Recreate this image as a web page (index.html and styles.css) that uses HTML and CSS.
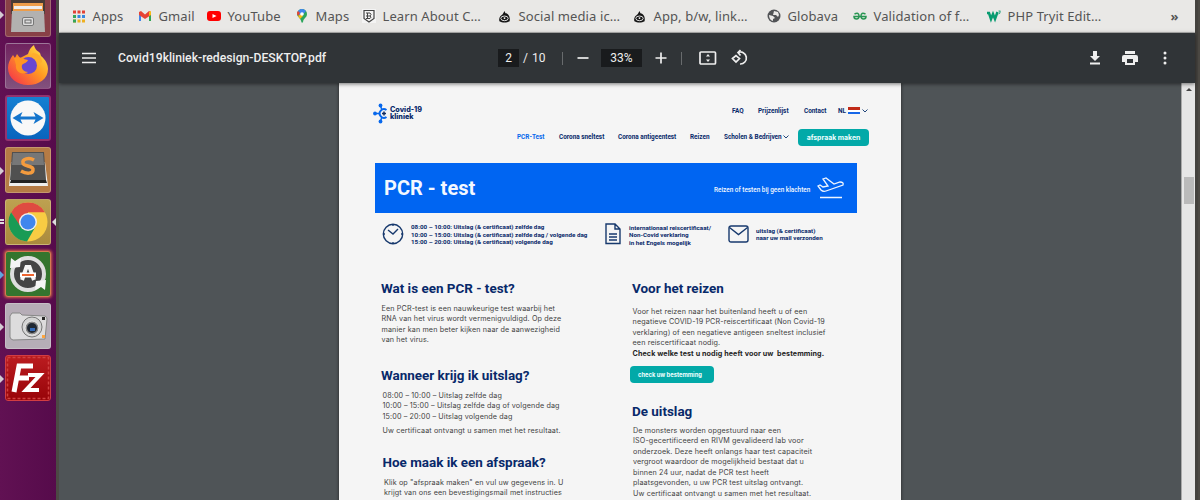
FILE: index.html
```html
<!DOCTYPE html>
<html lang="nl">
<head>
<meta charset="utf-8">
<title>Covid19kliniek-redesign-DESKTOP.pdf</title>
<link rel="stylesheet" href="styles.css">
</head>
<body>
<div class="desktop">
  <aside class="launcher">
    <div class="tile files"><svg viewBox="0 0 46 46"><path fill="#493b35" d="M6 6h34v17H6z"/><path fill="#ed9d4a" d="M8 12h30v8H8z"/><path fill="#eee" d="M9 15h28v3H9z"/><path fill="#b2b1b0" d="M7 20h32l1 21H6z"/><rect x="17.500" y="26.500" width="11" height="8" rx="1.500" fill="#ddd" stroke="#777"/><rect x="20" y="29" width="6" height="3" fill="#ddd" stroke="#666"/></svg><i class="pip"></i></div>
    <div class="tile firefox"><svg viewBox="0 0 46 46"><defs><linearGradient id="ff" x1="1" y1="0" x2="0" y2="1"><stop offset="0" stop-color="#fff04f"/><stop offset=".45" stop-color="#ff9b22"/><stop offset="1" stop-color="#f5264f"/></linearGradient></defs><path fill="url(#ff)" d="M23 11c1-4 3-7 6-9 1 5 4 6 6 8l1 3c5 4 7 9 7 13 0 10-9 16-20 16S3 35 3 25c0-5 2-9 5-13l2 3 2-4 3 4z"/><circle cx="23.500" cy="22.500" r="8.500" fill="#6847d1"/><path fill="#ff9524" d="M9 15c5-2 8 1 14 2-1 3-4 3-6 5-1 4 2 7 6 7-7 4-13-1-12-7z"/><path fill="#ffad2d" d="M24 14c6-1 9 3 9 8l4-3c0-6-5-9-9-9z"/></svg></div>
    <div class="tile viewer"><svg viewBox="0 0 46 46"><circle cx="23" cy="23" r="17.500" fill="#f8f8f8"/><path fill="#1475cd" d="m7.500 23 10-6-2 4.500h15l-2-4.500 10 6-10 6 2-4.500h-15l2 4.500z"/></svg></div>
    <div class="tile sublime"><svg viewBox="0 0 46 46"><path fill="#eee" d="M6 15h34l3 24H4z"/><path fill="#222" d="M6 33h35l1 3H5z"/><path fill="#505050" d="M7 5h32l2 28H5z"/><path fill="#777" d="M8 6h30l1 12H7z"/><path d="M29 13c-5-3-12-1-11 3 0 4 11 2 10 7 0 4-7 4-12 1" fill="none" stroke="#f49b3e" stroke-width="3.500"/></svg><i class="pip"></i></div>
    <div class="tile chrome"><svg viewBox="0 0 46 46"><circle cx="23" cy="23" r="19.500" fill="#f8cc43"/><path fill="#df4b41" d="M6.100 13.200A19.500 19.500 0 0 1 39.900 13.200H23v10l-8 5z"/><path fill="#199b55" d="M6.100 13.200A19.500 19.500 0 0 0 22 42.500l8-14-7-1-8-1z"/><circle cx="23" cy="23" r="9" fill="#eee"/><circle cx="23" cy="23" r="7.500" fill="#4086ee"/></svg><i class="pip double"></i><i class="active"></i></div>
    <div class="tile updater"><svg viewBox="0 0 46 46"><circle cx="23" cy="23" r="16" fill="#444" stroke="#dedede" stroke-width="4"/><path d="m5 17 1-10 4 3 6-3-1 9zM41 29l-1 10-4-3-6 3 1-9z" fill="#f5f5f5"/><path d="m17 29 4.500-13h3L29 29" fill="none" stroke="#f5f5f5" stroke-width="4"/><path d="M15 24h16" stroke="#fff" stroke-width="5"/><path d="M17 24h12" stroke="#ed6530" stroke-width="2"/></svg><i class="pip blue"></i></div>
    <div class="tile camera"><svg viewBox="0 0 46 46"><path fill="#dddcdd" stroke="#888" d="m5 13 2-3h8l2 2 23 1q2 1 2 3l-2 20-32 1q-3-1-3-3z"/><circle cx="27" cy="24" r="10" fill="#d4d4d4" stroke="#777"/><circle cx="27" cy="25" r="7" fill="#888" stroke="#eee"/><circle cx="27" cy="25" r="5" fill="#202832"/><path fill="#326ab8" d="M25 25h5v3h-5z"/><path fill="#262626" d="M37 14h3v3h-3z"/><path fill="#ffa43d" d="M37 32h3v3h-3z"/></svg><i class="pip"></i></div>
    <div class="tile filezilla"><svg viewBox="0 0 46 46"><rect x="2.500" y="2.500" width="41" height="41" fill="none" stroke="#d04040" stroke-width="1.500" stroke-dasharray="3 2"/><path d="m9 37 5-26h14M12 23h12" fill="none" stroke="#fff" stroke-width="5"/><path d="M23 20h12L21 35h13" fill="none" stroke="#fff" stroke-width="4"/></svg><i class="pip"></i></div>
  </aside>
  <main class="browser">
    <nav class="bookmarks">
      <a><svg viewBox="0 0 14 14"><path d="M1 3h12" stroke="#e34235" stroke-width="3" stroke-dasharray="3 1.500"/><path d="M1 7.500h12" stroke="#3487df" stroke-width="3" stroke-dasharray="3 1.500"/><path d="M1 12h12" stroke="#eeb020" stroke-width="3" stroke-dasharray="3 1.500"/><path d="M1 7.500h3M1 12h3" stroke="#35a65b" stroke-width="3"/></svg><span>Apps</span></a>
      <a><svg viewBox="0 0 14 14"><path d="M1 4v8h2V6" fill="#4185eb"/><path d="M11 6v6h2V4" fill="#30a554"/><path d="m1 3 2-1 4 3.500L11 2l2 1v3L7 10 1 6z" fill="#e64335"/><path d="m11 3 2-1v4l-2 1z" fill="#f8bb15"/></svg><span>Gmail</span></a>
      <a><svg viewBox="0 0 14 14"><rect y="2" width="14" height="10" rx="3" fill="#f00"/><path fill="#fff" d="m5.500 5 4 2-4 2z"/></svg><span>YouTube</span></a>
      <a><svg viewBox="0 0 14 14"><path fill="#2da55c" d="M2 5a5 5 0 0 1 10 0c0 4-4 4-4 8.500H6.500C6 9 2 8 2 5z"/><path fill="#4085ee" d="M3 2c3-3 6-2 8 0L5 9z"/><path fill="#e94435" d="m3 2 2 2-2 3Q1 4 3 2z"/><path fill="#fabb16" d="m3 7 3-2 2 2-3 3z"/><circle cx="7" cy="5" r="1.800" fill="#fff"/></svg><span>Maps</span></a>
      <a><svg viewBox="0 0 14 14"><path fill="#f4f4f4" d="M0 0h14v14H0z"/><path fill="none" stroke="#444" stroke-width="1.200" d="M2 1.500h10v8L7 13 2 9.500z"/><path fill="none" stroke="#444" d="M4 4h4q2 1.500 0 3H4M5.500 4v5.500M4 9.500h4q2-1.500 0-2.500"/></svg><span>Learn About C…</span></a>
      <a><svg class="eye" viewBox="0 0 14 14"><path fill="#151515" d="m7 1 1 2.500c3 0 5.500 4 4.500 8.500-3 2-8 2-11 0C.5 8 3 6 5 4.500z"/><ellipse cx="7" cy="9" rx="4" ry="2.500" fill="none" stroke="#eee"/><circle cx="7" cy="8.700" r="1" fill="#fff"/></svg><span>Social media ic…</span></a>
      <a><svg class="eye" viewBox="0 0 14 14"><path fill="#151515" d="m7 1 1 2.500c3 0 5.500 4 4.500 8.500-3 2-8 2-11 0C.5 8 3 6 5 4.500z"/><ellipse cx="7" cy="9" rx="4" ry="2.500" fill="none" stroke="#eee"/><circle cx="7" cy="8.700" r="1" fill="#fff"/></svg><span>App, b/w, link…</span></a>
      <a><svg viewBox="0 0 14 14"><circle cx="7" cy="7" r="6.500" fill="#515356"/><path fill="#e9e8e6" d="m2 6 4 1 2 2-2 1v2Q2 11 2 6zM7 2l4 1 1 3-1 2-2-2-3 0z"/></svg><span>Globava</span></a>
      <a><svg viewBox="0 0 14 14"><path fill="none" stroke="#299553" stroke-width="1.500" d="M1.500 5Q6 3 6 7q0 3-2.500 3T1 7.500h12Q13 10 10.500 10T8 7q0-4 4.500-2"/></svg><span>Validation of f…</span></a>
      <a><svg viewBox="0 0 14 14"><path fill="none" stroke="#089b70" stroke-width="2.500" d="M0 4h2l2 6 2-5 2 5 2.500-7"/><path d="M11.500 2h2l-1 1q2 1-1 2" stroke="#089b70" stroke-width=".8" fill="none"/></svg><span>PHP Tryit Edit…</span></a>
      <b>»</b>
    </nav>
    <header class="pdfbar">
      <svg class="menu" viewBox="0 0 14 12"><path d="M0 1.500h14M0 6h14M0 10.500h14"/></svg>
      <span class="filename">Covid19kliniek-redesign-DESKTOP.pdf</span>
      <span class="box num">2</span><span class="total">/&nbsp;10</span><i></i>
      <svg class="minus" viewBox="0 0 12 12"><path d="M.5 6h11"/></svg>
      <span class="box">33%</span>
      <svg class="plus" viewBox="0 0 12 12"><path d="M.5 6h11M6 .5v11"/></svg><i></i>
      <svg class="fit" viewBox="0 0 18 14"><rect x="1" y="1" width="15.500" height="12" rx="1"/><path class="solid" d="m9 3 2 2.500H7zM9 11l2-2.500H7z"/></svg>
      <svg class="rotate" viewBox="0 0 17 16"><path d="m1.500 8.500 3.500-3 3.500 3-3.500 3.500zM7 2.500a6 6 0 1 1 2 11.500M9.500 0 7 2.500 9.500 5.500"/></svg>
      <svg class="download" viewBox="0 0 12 14"><path class="solid" d="M4 0h4v5h3l-5 5-5-5h3zM1 11.500h10v2H1z"/></svg>
      <svg class="print" viewBox="0 0 16 14"><path class="solid" d="M3 0h10v3H3zM2 4h12q2 0 2 2v5h-3v3H3v-3H0V6q0-2 2-2m3 5v3h6V8H5z"/></svg>
      <svg class="more" viewBox="0 0 4 14"><circle class="solid" cx="2" cy="2" r="1.500"/><circle class="solid" cx="2" cy="7" r="1.500"/><circle class="solid" cx="2" cy="12" r="1.500"/></svg>
    </header>
    <div class="viewerpane">
      <article class="page">
        <header class="siteheader">
          <div class="logo"><svg viewBox="0 0 17 21"><path d="m7.500 3 1.500 4M2 10.500h4M7.500 18l1.500-4" stroke="#0868ec" stroke-width="1.500"/><path d="M13.500 7A4.300 4.300 0 1 0 13.500 14" fill="none" stroke="#0868ec" stroke-width="2"/><circle cx="7.500" cy="2.500" r="1.900" fill="#0868ec"/><circle cx="2" cy="10.500" r="1.900" fill="#0868ec"/><circle cx="7.500" cy="18.500" r="1.900" fill="#0868ec"/><path d="M9 10.500h4M11 8.500v4" stroke="#122d62" stroke-width="1.500"/></svg><strong>Covid-19<br>kliniek</strong></div>
          <div class="navs">
            <nav class="topnav"><span>FAQ</span><span>Prijzenlijst</span><span>Contact</span><span>NL</span><i class="flag"></i><svg viewBox="0 0 6 4"><path d="m.5.5 2.500 2.500L5.500.5"/></svg></nav>
            <nav class="mainnav"><span class="current">PCR-Test</span><span>Corona sneltest</span><span>Corona antigeentest</span><span>Reizen</span><span>Scholen &amp; Bedrijven</span><svg viewBox="0 0 6 4"><path d="m.5.5 2.500 2.500L5.500.5"/></svg><button>afspraak maken</button></nav>
          </div>
        </header>
        <section class="hero"><h1>PCR - test</h1><span>Reizen of testen bij geen klachten</span><svg viewBox="0 0 27 22"><path d="m1 9 2-1 3 2 5-1L6 2l3-1 8 6 6-2q4 0 3 3L9 14q-3 1-5-1zM3 20.500h22"/></svg></section>
        <section class="facts">
          <svg class="clock" viewBox="0 0 22 22"><circle cx="11" cy="11" r="9.700"/><path d="m6 7 5 4 5-5M11 1v2M11 19v2M1 11h2M19 11h2"/></svg>
          <p class="hours">08:00 – 10:00: Uitslag (&amp; certificaat) zelfde dag<br>10:00 – 15:00: Uitslag (&amp; certificaat) zelfde dag / volgende dag<br>15:00 – 20:00: Uitslag (&amp; certificaat) volgende dag</p>
          <svg class="doc" viewBox="0 0 16 22"><path d="M1 1h9l5 5v14.500H1zM10 1v5h5M4 11h8M4 14h8M4 17h8"/></svg>
          <p class="cert">internationaal reiscertificaat/<br>Non-Covid verklaring<br>in het Engels mogelijk</p>
          <svg class="mail" viewBox="0 0 21 18"><rect x="1" y="1" width="19" height="16" rx="2"/><path d="m1.500 2.500 9 7 9-7"/></svg>
          <p class="mailtext">uitslag (&amp; certificaat)<br>naar uw mail verzonden</p>
        </section>
        <div class="columns">
          <div class="left">
            <h2>Wat is een PCR - test?</h2>
            <p class="intro">Een PCR-test is een nauwkeurige test waarbij het<br>RNA van het virus wordt vermenigvuldigd. Op deze<br>manier kan men beter kijken naar de aanwezigheid<br>van het virus.</p>
            <h2>Wanneer krijg ik uitslag?</h2>
            <p class="times">08:00 – 10:00 – Uitslag zelfde dag<br>10:00 – 15:00 – Uitslag zelfde dag of volgende dag<br>15:00 – 20:00 – Uitslag volgende dag</p>
            <p class="result">Uw certificaat ontvangt u samen met het resultaat.</p>
            <h2 class="how">Hoe maak ik een afspraak?</h2>
            <p class="steps">Klik op "afspraak maken" en vul uw gegevens in. U<br>krijgt van ons een bevestigingsmail met instructies</p>
          </div>
          <div class="right">
            <h2>Voor het reizen</h2>
            <p class="travel">Voor het reizen naar het buitenland heeft u of een<br>negatieve COVID-19 PCR-reiscertificaat (Non Covid-19<br>verklaring) of een negatieve antigeen sneltest inclusief<br>een reiscertificaat nodig.<br><strong>Check welke test u nodig heeft voor uw &nbsp;bestemming.</strong></p>
            <button>check uw bestemming</button>
            <h2>De uitslag</h2>
            <p class="lab">De monsters worden opgestuurd naar een<br>ISO-gecertificeerd en RIVM gevalideerd lab voor<br>onderzoek. Deze heeft onlangs haar test capaciteit<br>vergroot waardoor de mogelijkheid bestaat dat u<br>binnen 24 uur, nadat de PCR test heeft<br>plaatsgevonden, u uw PCR test uitslag ontvangt.<br>Uw certificaat ontvangt u samen met het resultaat.</p>
          </div>
        </div>
      </article>
      <div class="scrollbar"><i class="up"></i><i class="thumb"></i></div>
    </div>
  </main>
</div>
</body>
</html>
```
FILE: styles.css
```css
* { box-sizing: border-box; }
body { margin: 0; width: 1200px; height: 500px; overflow: hidden; font-family: Roboto, sans-serif; }
h1, h2, p { margin: 0; }
svg { display: block; overflow: visible; }
.desktop { display: flex; height: 500px; background: #4c4944; }

.launcher { width: 56px; height: 500px; overflow: hidden; background: linear-gradient(90deg, #611153, #560b4b); display: flex; flex-direction: column; gap: 6px; padding-left: 5px; }
.tile { position: relative; width: 46px; height: 46px; flex: none; border-radius: 3px; border: 1px solid #ffffff38; }
.tile > svg { width: 46px; height: 46px; margin: -1px; }
.files { margin-top: -9px; background: #884047; }
.firefox { background: linear-gradient(#70235f, #82517d); }
.viewer { background: linear-gradient(#1680d2, #0864bd); border: 2px solid #93336e; }
.viewer > svg { margin: -2px; }
.sublime { background: #b57b45; }
.chrome { background: linear-gradient(#bda150, #aa8b3d); }
.updater { background: #34752e; border-color: #d57a51; box-shadow: 0 0 3px 1px #d36249; }
.camera { background: #b6adb7; }
.filezilla { background: linear-gradient(#bb1c20, #980409); border-color: #d23d42; }
.pip { position: absolute; left: -6px; top: 19px; border: 4px solid transparent; border-left-color: #d4ccd4; border-right: 0; }
.pip.blue { border-left-color: #60a5df; }
.pip.double { border: 0; width: 4px; height: 5px; border-top: 2px solid #ddd; border-bottom: 2px solid #ddd; }
.active { position: absolute; right: -6px; top: 18px; border: 4px solid transparent; border-right-color: #ddd; border-left: 0; }

.browser { width: 1139px; margin-left: 3px; margin-right: 2px; border-right: 3px solid #44423e; flex: none; display: flex; flex-direction: column; }
.bookmarks { height: 33px; background: #e9e8e6; border-bottom: 1px solid #b7b7b6; display: grid; grid-template-columns: 66px 69px 88px 67px 136px 135px 134px 86px 134px 184px auto; align-items: center; padding-left: 12.500px; color: #555; font: 13px "Noto Sans", sans-serif; letter-spacing: .1px; white-space: nowrap; }
.bookmarks a { display: flex; align-items: center; gap: 7px; }
.bookmarks a svg { width: 14px; height: 14px; flex: none; }
.bookmarks a .eye { width: 13px; height: 13px; margin-right: 1px; }
.bookmarks b { font-size: 13px; }
.pdfbar { height: 50px; flex: none; background: #303437; color: #eee; display: flex; align-items: center; padding-left: 23px; font-size: 12px; position: relative; box-shadow: 0 1px 4px #0008; z-index: 1; }
.pdfbar svg { flex: none; fill: none; stroke: #eee; stroke-width: 1.700; }
.pdfbar .solid { fill: #eee; stroke: none; }
.menu { width: 14px; height: 12px; }
.filename { width: 380px; margin-left: 22px; font-size: 12.200px; font-weight: 500; }
.box { width: 41px; height: 18px; line-height: 18px; background: #191b1d; text-align: center; flex: none; }
.box.num { width: 21px; }
.total { width: 39px; padding-left: 4px; word-spacing: 1px; }
.pdfbar i { width: 1px; height: 13px; background: #686b6d; margin-left: 4px; }
.minus { width: 12px; height: 12px; margin: 0 12px 0 14px; }
.plus { width: 12px; height: 12px; margin: 0 10px 0 13px; }
.fit { width: 18px; height: 14px; margin-left: 17px; }
.rotate { width: 17px; height: 16px; margin-left: 14px; }
.download { width: 12px; height: 14px; margin-left: 340.500px; }
.print { width: 16px; height: 14px; margin-left: 21px; }
.more { width: 4px; height: 14px; margin-left: 25px; }

.viewerpane { flex: 1; min-height: 0; background: #4f5457; display: flex; justify-content: space-between; overflow: hidden; padding-left: 280px; }
.page { width: 562px; height: 500px; background: #f5f5f5; flex: none; color: #08296a; box-shadow: 0 0 3px #222; }
.siteheader { display: flex; padding: 20px 0 0 34px; height: 79.500px; }
.logo { display: flex; width: 144px; height: 21px; }
.logo svg { width: 17px; height: 21px; }
.logo strong { font: 800 7.200px/7px Inter, sans-serif; padding-top: 3px; }
.navs { font-size: 6.400px; font-weight: 700; white-space: nowrap; }
.navs svg { width: 6px; height: 4px; fill: none; stroke: #23477b; }
.topnav { display: grid; grid-template-columns: 26px 46px 34px 10px 14px 6px; padding-left: 215px; align-items: center; height: 15px; }
.flag { width: 12px; height: 7px; background: linear-gradient(#c12b18 0 36%, #fff 36% 65%, #1767e8 65%); }
.mainnav { display: grid; grid-template-columns: 42px 59px 72px 34px 59px 15px 71px; align-items: center; margin-top: 10px; height: 18px; }
.current { color: #0868ec; }
button { border: 0; padding: 0; border-radius: 4px; background: #02a9a8; color: #eff; font-family: Inter, sans-serif; font-weight: 700; }
.mainnav button { height: 17px; font-size: 6.900px; }
.hero { height: 50.500px; width: 482px; margin-left: 36px; background: #0065f2; color: #f4f8ff; display: flex; align-items: center; padding-left: 9px; font-size: 6.400px; font-weight: 500; }
.hero h1 { font-size: 20px; line-height: 22px; width: 330px; }
.hero span { width: 103px; white-space: nowrap; padding-top: 4px; }
.hero svg { width: 27px; height: 22px; fill: none; stroke: #eef5ff; stroke-width: 1.300; }
.facts { display: grid; grid-template-columns: 29px 194px 24px 99px 28px 90px; align-items: center; padding-left: 43px; height: 46px; margin-top: -2px; font-size: 6.250px; font-weight: 700; line-height: 7.500px; white-space: nowrap; }
.facts svg { fill: none; stroke: #17396d; stroke-width: 1.400; }
.clock { width: 22px; height: 22px; }
.hours { padding-top: 3px; }
.doc { width: 16px; height: 22px; }
.cert { padding-top: 4px; font-size: 6.250px; }
.mail { width: 21px; height: 18px; }
.mailtext { padding-top: 2px; }
.columns { display: grid; grid-template-columns: 251px 250px; padding: 22.500px 0 0 42px; white-space: nowrap; }
.columns h2 { font-size: 13.450px; line-height: 18px; height: 18px; }
.columns p { color: #424242; font: 7.200px/10.500px Inter, sans-serif; letter-spacing: .13px; }
.columns .intro { margin: 6px 0 21px .5px; }
.columns .times { margin: 6px 0 3.500px 1.500px; }
.columns .result { margin-left: 1.500px; }
.columns .how { margin: 17.500px 0 6px 1.500px; }
.columns .steps { margin-left: 3px; }
.columns .travel { margin: 9px 0 7px .5px; }
.columns .travel strong { color: #252525; letter-spacing: .09px; }
.right > button { display: block; width: 84px; height: 17px; font-size: 5.800px; margin: 0 0 19.500px -2px; padding-right: 4px; }
.columns .lab { margin: 5px 0 0 1px; }
.scrollbar { width: 14px; background: #e6e6e6; border-left: 1px solid #aaa; display: flex; flex-direction: column; align-items: center; }
.up { margin-top: 5px; border: 3px solid transparent; border-top: 0; border-bottom: 3px solid #444; }
.thumb { width: 10px; height: 27px; background: #bababa; margin-top: 86px; }
```
